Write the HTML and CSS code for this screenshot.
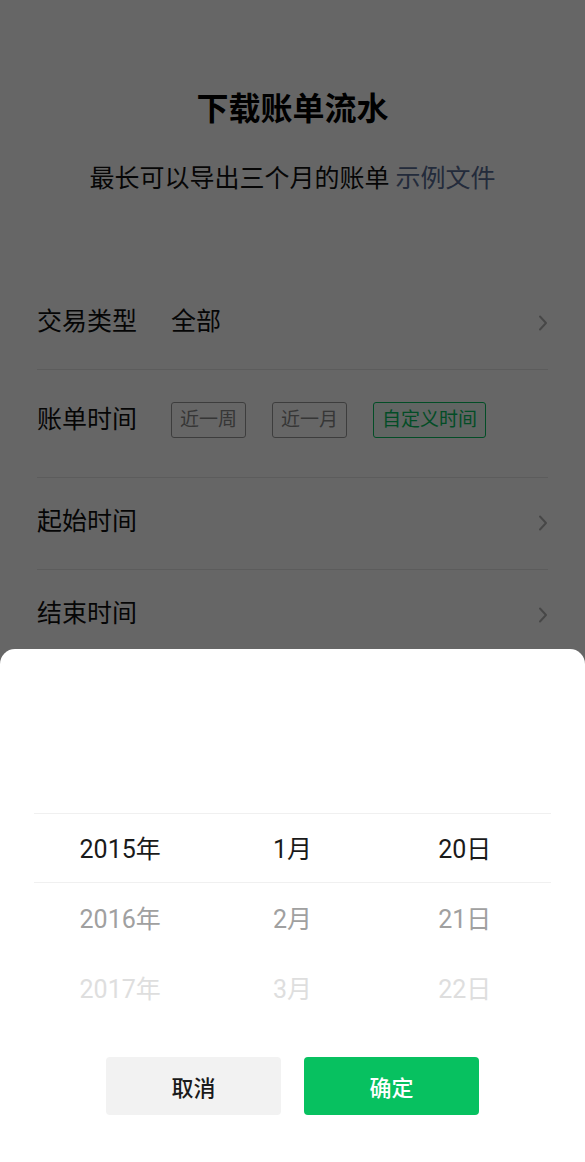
FILE: index.html
```html
<!DOCTYPE html>
<html lang="zh-CN">
<head>
<meta charset="utf-8">
<title>下载账单流水</title>
<link rel="stylesheet" href="styles.css">
</head>
<body>
<main class="page">
  <h1 class="title">下载账单流水</h1>
  <p class="subtitle">最长可以导出三个月的账单 <a class="link">示例文件</a></p>
  <section class="form">
    <div class="row">
      <span class="label">交易类型</span>
      <span class="value">全部</span>
      <svg class="chev" width="10" height="16" viewBox="0 0 10 16"><polyline points="2,1.5 8,8 2,14.5" fill="none" stroke="#b2b2b2" stroke-width="2" stroke-linecap="round" stroke-linejoin="round"/></svg>
    </div>
    <div class="row row-tall">
      <span class="label">账单时间</span>
      <div class="chips">
        <span class="chip">近一周</span>
        <span class="chip">近一月</span>
        <span class="chip chip-on">自定义时间</span>
      </div>
    </div>
    <div class="row">
      <span class="label">起始时间</span>
      <span class="value"></span>
      <svg class="chev" width="10" height="16" viewBox="0 0 10 16"><polyline points="2,1.5 8,8 2,14.5" fill="none" stroke="#b2b2b2" stroke-width="2" stroke-linecap="round" stroke-linejoin="round"/></svg>
    </div>
    <div class="row row-last">
      <span class="label">结束时间</span>
      <span class="value"></span>
      <svg class="chev" width="10" height="16" viewBox="0 0 10 16"><polyline points="2,1.5 8,8 2,14.5" fill="none" stroke="#b2b2b2" stroke-width="2" stroke-linecap="round" stroke-linejoin="round"/></svg>
    </div>
  </section>
</main>
<div class="mask"></div>
<div class="sheet">
  <div class="picker">
    <div class="prow prow-sel">
      <span>2015年</span><span>1月</span><span>20日</span>
    </div>
    <div class="prow prow-2">
      <span>2016年</span><span>2月</span><span>21日</span>
    </div>
    <div class="prow prow-3">
      <span>2017年</span><span>3月</span><span>22日</span>
    </div>
  </div>
  <div class="actions">
    <button class="btn btn-cancel">取消</button>
    <button class="btn btn-ok">确定</button>
  </div>
</div>
</body>
</html>
```
FILE: styles.css
```css
html, body {
  margin: 0;
  padding: 0;
  height: 100%;
  overflow: hidden;
  background: #ffffff;
  font-family: Roboto, "Noto Sans CJK SC", "Noto Sans", sans-serif;
  color: #111111;
}

.page {
  padding: 87px 37px 0;
}

.title {
  margin: 0;
  text-align: center;
  font-size: 32px;
  line-height: 44px;
  font-weight: 700;
  color: #000;
}

.subtitle {
  margin: 30px 0 0;
  text-align: center;
  font-size: 25px;
  line-height: 36px;
  color: #111;
}

.link {
  color: #576b95;
}

.form {
  margin-top: 81px;
}

.row {
  display: flex;
  align-items: center;
  height: 92px;
  padding-bottom: 4px;
  box-sizing: border-box;
  border-bottom: 1px solid #e6e6e6;
  font-size: 25px;
}

.row-tall {
  height: 108px;
  padding-bottom: 7px;
}

.row-last {
  border-bottom: none;
}

.label {
  width: 134px;
  flex: none;
  line-height: 36px;
}

.value {
  flex: 1;
  line-height: 36px;
}

.chev {
  flex: none;
  margin-top: 2px;
}

.chips {
  display: flex;
  gap: 26px;
}

.chip {
  height: 36px;
  box-sizing: border-box;
  padding: 0 8px;
  border: 1.5px solid #9a9a9a;
  border-radius: 3px;
  font-size: 19px;
  line-height: 33px;
  color: #888888;
}

.chip-on {
  border-color: #07c160;
  color: #07c160;
  background: rgba(7, 193, 96, 0.05);
}

.mask {
  position: fixed;
  inset: 0;
  background: rgba(0, 0, 0, 0.6);
}

.sheet {
  position: fixed;
  left: 0;
  right: 0;
  bottom: 0;
  height: 513px;
  background: #ffffff;
  border-radius: 15px 15px 0 0;
  display: flex;
  flex-direction: column;
}

.picker {
  margin: 164px 34px 0;
}

.prow {
  display: grid;
  grid-template-columns: 1fr 1fr 1fr;
  height: 70px;
  box-sizing: border-box;
  padding-bottom: 3px;
  align-items: center;
  text-align: center;
  font-size: 25px;
  color: #1a1a1a;
}

.prow-sel {
  border-top: 1px solid #f0f0f0;
  border-bottom: 1px solid #f0f0f0;
}

.prow-2 {
  color: #a0a0a0;
}

.prow-3 {
  color: #dedede;
}

.actions {
  display: flex;
  justify-content: center;
  gap: 23px;
  margin-top: 34px;
}

.btn {
  width: 175px;
  height: 58px;
  border: none;
  border-radius: 4px;
  font-family: Roboto, "Noto Sans CJK SC", "Noto Sans", sans-serif;
  font-size: 22px;
  font-weight: 500;
  padding: 0;
}

.btn-cancel {
  background: #f2f2f2;
  color: #1a1a1a;
}

.btn-ok {
  background: #07c160;
  color: #ffffff;
}
```
